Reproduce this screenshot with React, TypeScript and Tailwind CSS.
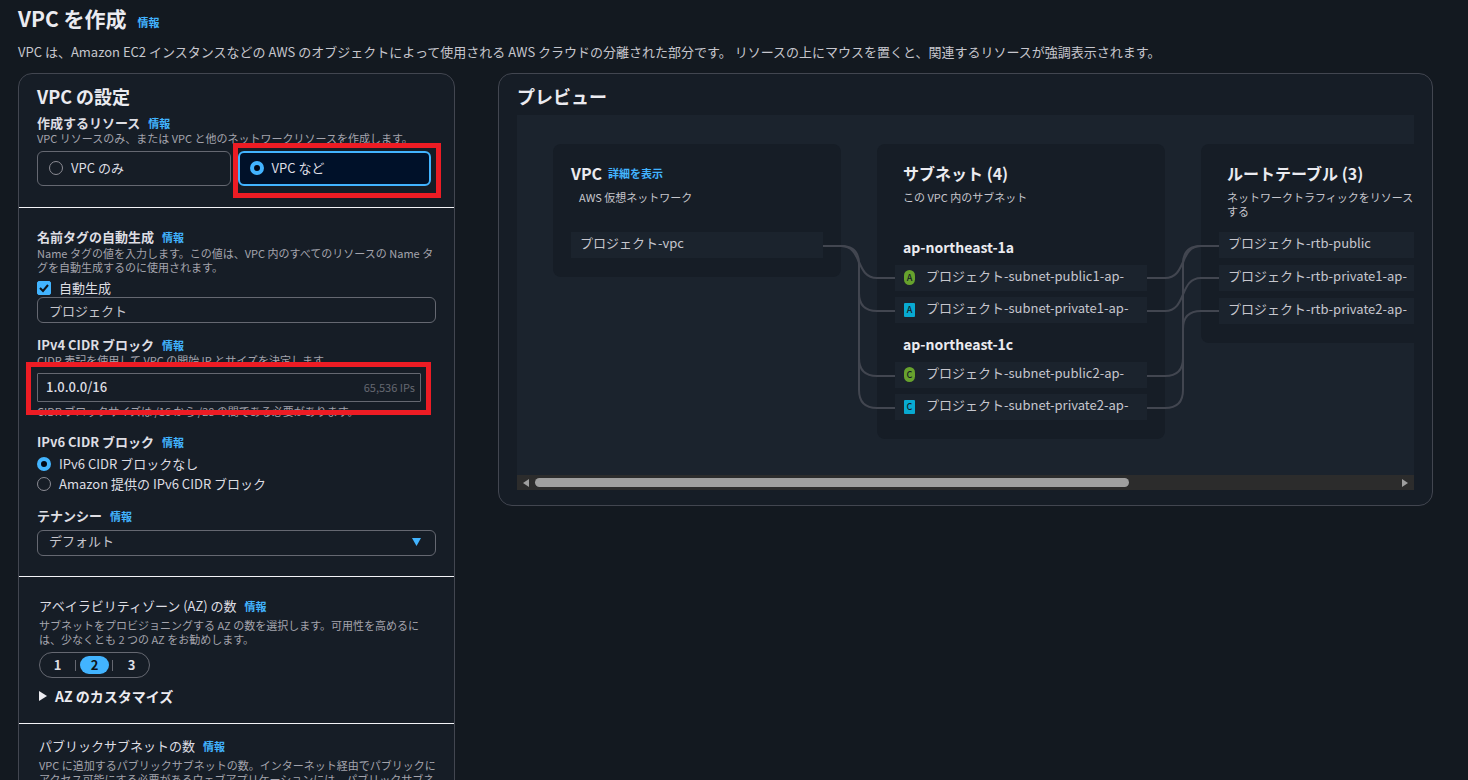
import { useState } from 'react';
import type { ReactNode } from 'react';

const subnetZones = [
  {
    zone: 'ap-northeast-1a',
    letter: 'A',
    subnets: [
      { name: 'プロジェクト-subnet-public1-ap-', isPublic: true },
      { name: 'プロジェクト-subnet-private1-ap-', isPublic: false },
    ],
  },
  {
    zone: 'ap-northeast-1c',
    letter: 'C',
    subnets: [
      { name: 'プロジェクト-subnet-public2-ap-', isPublic: true },
      { name: 'プロジェクト-subnet-private2-ap-', isPublic: false },
    ],
  },
];

const routeTables = [
  'プロジェクト-rtb-public',
  'プロジェクト-rtb-private1-ap-',
  'プロジェクト-rtb-private2-ap-',
];

// connectors between the resource rows
const connectors = [
  'M306 131H324C346 131 338 163 360 163H378',
  'M306 131H324Q342 131 342 149V178Q342 196 360 196H378',
  'M342 149V243Q342 261 360 261H378',
  'M342 149V275Q342 293 360 293H378',
  'M630 163H648C670 163 662 131 684 131H702',
  'M630 196H648C670 196 662 163 684 163H702',
  'M630 261H648Q666 261 666 243V149Q666 131 684 131H702',
  'M630 293H648Q666 293 666 275V214Q666 196 684 196H702',
];

function InfoLink({ children = '情報' }: { children?: ReactNode }) {
  return (
    <a href="#" className="text-[11px] font-bold text-[#42b4ff]">
      {children}
    </a>
  );
}

function Hint({ children }: { children: ReactNode }) {
  return <p className="text-[11px] leading-[14px] text-[#a4a4ad]">{children}</p>;
}

function FieldTitle({ children, light }: { children: ReactNode; light?: boolean }) {
  return (
    <div className="flex items-center gap-2 leading-4">
      <span className={light ? 'text-[#dedee3]' : 'font-bold text-[#dedee3]'}>{children}</span>
      <InfoLink />
    </div>
  );
}

function Radio({
  name,
  checked,
  onChange,
}: {
  name: string;
  checked: boolean;
  onChange: () => void;
}) {
  return (
    <input
      type="radio"
      name={name}
      checked={checked}
      onChange={onChange}
      className="size-[14px] shrink-0 appearance-none rounded-full border border-[#8c8c94] checked:border-4 checked:border-[#42b4ff] checked:bg-[#000716]"
    />
  );
}

function ResourceCard({
  title,
  description,
  link,
  inset,
  children,
}: {
  title: string;
  description: string;
  link?: string;
  inset?: boolean;
  children: ReactNode;
}) {
  return (
    <section className="w-[288px] shrink-0 rounded-lg bg-[#161d26] px-[18px] pb-[19px]">
      <div className={inset ? 'h-[88px] pt-[19px] pl-2' : 'h-[88px] pt-[19px]'}>
        <h3 className="flex items-center gap-[6px] text-base leading-5 font-bold text-[#ebebf0]">
          {title}
          {link && <InfoLink>{link}</InfoLink>}
        </h3>
        <p
          className={
            inset
              ? 'mt-[7px] text-[11px] leading-[14px] whitespace-pre text-[#c6c6cd]'
              : 'mt-[7px] pl-2 text-[11px] leading-[14px] text-[#c6c6cd]'
          }
        >
          {description}
        </p>
      </div>
      {children}
    </section>
  );
}

function ResourceRow({ children }: { children: ReactNode }) {
  return (
    <li className="flex h-[26px] items-center gap-[11px] bg-[#1b232d] px-[9px] pb-1 whitespace-nowrap text-[#c6c6cd]">
      {children}
    </li>
  );
}

function ZoneBadge({ letter, isPublic }: { letter: string; isPublic: boolean }) {
  return (
    <span
      className={
        isPublic
          ? 'mt-[3px] flex h-[15px] w-[11px] items-center justify-center rounded-full bg-[#67a22d] text-[9px] font-medium text-[#161d26]'
          : 'mt-[3px] flex h-[14px] w-[11px] items-center justify-center rounded-[1px] bg-[#08aad2] text-[9px] font-medium text-[#161d26]'
      }
    >
      {letter}
    </span>
  );
}

function PreviewPanel() {
  return (
    <section className="min-w-0 rounded-[14px] border border-[#424650] bg-[#161d26] px-[18px] pt-[10px] pb-[15px]">
      <h2 className="text-lg leading-6 font-bold text-[#ebebf0]">プレビュー</h2>
      <div className="mt-[7px] overflow-hidden bg-[#1b232d]">
        <div className="relative flex h-[360px] items-start gap-9 pt-[29px] pl-9">
          <ResourceCard title="VPC" link="詳細を表示" description="AWS 仮想ネットワーク">
            <ul>
              <ResourceRow>プロジェクト-vpc</ResourceRow>
            </ul>
          </ResourceCard>

          <ResourceCard inset title="サブネット (4)" description="この VPC 内のサブネット">
            <div className="flex flex-col gap-[6px]">
              {subnetZones.map(({ zone, letter, subnets }) => (
                <div key={zone}>
                  <h4 className="h-[33px] pl-2 text-sm leading-[30px] font-bold text-[#ebebf0]">
                    {zone}
                  </h4>
                  <ul className="flex flex-col gap-[6px]">
                    {subnets.map((subnet) => (
                      <ResourceRow key={subnet.name}>
                        <ZoneBadge letter={letter} isPublic={subnet.isPublic} />
                        {subnet.name}
                      </ResourceRow>
                    ))}
                  </ul>
                </div>
              ))}
            </div>
          </ResourceCard>

          <ResourceCard
            inset
            title="ルートテーブル (3)"
            description={'ネットワークトラフィックをリソースにルーティング\nする'}
          >
            <ul className="flex flex-col gap-[7px]">
              {routeTables.map((name) => (
                <ResourceRow key={name}>{name}</ResourceRow>
              ))}
            </ul>
          </ResourceCard>

          <svg
            className="pointer-events-none absolute top-0 left-0"
            width="972"
            height="360"
            fill="none"
            stroke="#424650"
            strokeWidth="2"
          >
            {connectors.map((d) => (
              <path key={d} d={d} />
            ))}
          </svg>
        </div>

        <div className="flex h-[15px] items-center bg-[#2c2c2c] px-[6px]">
          <svg width="6" height="8" viewBox="0 0 6 8" fill="#9f9f9f">
            <path d="M6 0v8L0 4z" />
          </svg>
          <div className="mx-[6px] flex-1">
            <div className="h-[9px] w-[69%] rounded-full bg-[#9f9f9f]" />
          </div>
          <svg width="6" height="8" viewBox="0 0 6 8" fill="#9f9f9f">
            <path d="M0 0v8l6-4z" />
          </svg>
        </div>
      </div>
    </section>
  );
}

function SettingsPanel() {
  const [resource, setResource] = useState('more');
  const [autoName, setAutoName] = useState(true);
  const [nameTag, setNameTag] = useState('プロジェクト');
  const [cidr, setCidr] = useState('1.0.0.0/16');
  const [ipv6, setIpv6] = useState('none');
  const [azCount, setAzCount] = useState(2);

  return (
    <section className="divide-y divide-[#f3f3f7] rounded-t-[14px] border border-[#424650] bg-[#161d26]">
      <div className="px-[18px] pt-[10px] pb-[21px]">
        <h2 className="text-lg leading-6 font-bold text-[#ebebf0]">VPC の設定</h2>
        <div className="mt-[7px]">
          <FieldTitle>作成するリソース</FieldTitle>
          <Hint>VPC リソースのみ、または VPC と他のネットワークリソースを作成します。</Hint>
        </div>
        <div className="mt-[6px] grid grid-cols-2 gap-[7px] pr-[5px]">
          <label className="flex h-[35px] items-center gap-2 rounded-md border border-[#656871] px-[11px] pb-px text-[#dedee3]">
            <Radio name="resource" checked={resource === 'only'} onChange={() => setResource('only')} />
            VPC のみ
          </label>
          <div className="relative">
            <label className="flex h-[35px] items-center gap-2 rounded-md border-2 border-[#42b4ff] bg-[#001129] px-[10px] pb-px text-[#dedee3]">
              <Radio name="resource" checked={resource === 'more'} onChange={() => setResource('more')} />
              VPC など
            </label>
            <span className="pointer-events-none absolute -top-2 -right-[10px] -bottom-3 -left-[5px] border-5 border-[#ed1c24]" />
          </div>
        </div>
      </div>

      <div className="px-[18px] pt-[21px] pb-5">
        <FieldTitle>名前タグの自動生成</FieldTitle>
        <div className="mt-px">
          <Hint>
            Name タグの値を入力します。この値は、VPC 内のすべてのリソースの Name タグを自動生成するのに使用されます。
          </Hint>
        </div>
        <label className="mt-[6px] flex items-center gap-2 leading-4 text-[#dedee3]">
          <span className="relative flex size-[14px]">
            <input
              type="checkbox"
              checked={autoName}
              onChange={(e) => setAutoName(e.target.checked)}
              className="size-[14px] appearance-none rounded-[2px] border border-[#8c8c94] checked:border-[#42b4ff] checked:bg-[#42b4ff]"
            />
            {autoName && (
              <svg
                className="pointer-events-none absolute inset-0"
                viewBox="0 0 14 14"
                fill="none"
                stroke="#0f141a"
                strokeWidth="2"
              >
                <path d="M3 7l3 3 5-6" />
              </svg>
            )}
          </span>
          自動生成
        </label>
        <input
          type="text"
          aria-label="名前タグ"
          value={nameTag}
          onChange={(e) => setNameTag(e.target.value)}
          className="mt-px block h-[26px] w-full rounded-md border border-[#656871] bg-transparent px-[11px] text-[#c6c6cd] outline-none"
        />

        <div className="mt-[14px]">
          <FieldTitle>IPv4 CIDR ブロック</FieldTitle>
          <Hint>CIDR 表記を使用して VPC の開始 IP とサイズを決定します。</Hint>
        </div>
        <div className="relative mt-[6px] mr-[15px]">
          <div className="flex h-[29px] items-center rounded-[1px] border border-[#656871] pr-[5px] pl-2">
            <input
              type="text"
              aria-label="IPv4 CIDR ブロック"
              value={cidr}
              onChange={(e) => setCidr(e.target.value)}
              className="min-w-0 flex-1 bg-transparent pb-px font-medium text-[#dedee3] outline-none"
            />
            <span className="text-[11px] text-[#656871]">65,536 IPs</span>
          </div>
          <span className="pointer-events-none absolute -top-[11px] -right-[10px] -bottom-[13px] -left-[11px] border-5 border-[#ed1c24]" />
        </div>
        <div className="mt-[2px]">
          <Hint>CIDR ブロックサイズは /16 から /28 の間である必要があります。</Hint>
        </div>

        <div className="mt-4">
          <FieldTitle>IPv6 CIDR ブロック</FieldTitle>
        </div>
        <div className="mt-1 text-[#dedee3]">
          <label className="flex h-5 items-center gap-2">
            <Radio name="ipv6" checked={ipv6 === 'none'} onChange={() => setIpv6('none')} />
            IPv6 CIDR ブロックなし
          </label>
          <label className="flex h-5 items-center gap-2">
            <Radio name="ipv6" checked={ipv6 === 'amazon'} onChange={() => setIpv6('amazon')} />
            Amazon 提供の IPv6 CIDR ブロック
          </label>
        </div>

        <div className="mt-[14px]">
          <FieldTitle>テナンシー</FieldTitle>
        </div>
        <div className="relative mt-[6px]">
          <select
            aria-label="テナンシー"
            className="block h-[26px] w-full appearance-none rounded-md border border-[#656871] bg-[#161d26] px-[11px] pb-1 text-[#c6c6cd] outline-none"
          >
            <option>デフォルト</option>
            <option>専有</option>
          </select>
          <svg
            className="pointer-events-none absolute top-2 right-[15px]"
            width="9"
            height="8"
            viewBox="0 0 9 8"
            fill="#42b4ff"
          >
            <path d="M0 0h9L4.5 8z" />
          </svg>
        </div>
      </div>

      <div className="px-5 pt-[21px] pb-[17px]">
        <FieldTitle light>アベイラビリティゾーン (AZ) の数</FieldTitle>
        <div className="mt-1">
          <Hint>
            サブネットをプロビジョニングする AZ の数を選択します。可用性を高めるには、少なくとも 2 つの AZ をお勧めします。
          </Hint>
        </div>
        <div className="mt-[6px] flex h-[26px] w-[111px] items-center justify-between rounded-full border border-[#656871] px-[3px]">
          {[1, 2, 3].map((n) => (
            <div key={n} className="flex items-center gap-1">
              {n > 1 && <span className="h-[11px] w-px bg-[#656871]" />}
              <button
                type="button"
                onClick={() => setAzCount(n)}
                className={
                  azCount === n
                    ? 'h-[18px] w-[29px] rounded-full bg-[#42b4ff] leading-[18px] font-bold text-[#0f141a]'
                    : 'h-[18px] w-[29px] rounded-full leading-[18px] font-bold text-[#dedee3]'
                }
              >
                {n}
              </button>
            </div>
          ))}
        </div>
        <button
          type="button"
          className="mt-2 flex items-center gap-2 text-sm leading-5 font-bold text-[#ebebf0]"
        >
          <svg width="8" height="10" viewBox="0 0 8 10" fill="currentColor">
            <path d="M0 0v10l8-5z" />
          </svg>
          AZ のカスタマイズ
        </button>
      </div>

      <div className="pt-[14px] pr-3 pb-5 pl-5">
        <FieldTitle light>パブリックサブネットの数</FieldTitle>
        <div className="mt-1">
          <Hint>
            VPC に追加するパブリックサブネットの数。インターネット経由でパブリックにアクセス可能にする必要があるウェブアプリケーションには、パブリックサブネットを使用します。
          </Hint>
        </div>
      </div>
    </section>
  );
}

export default function App() {
  return (
    <main
      lang="ja"
      className="h-screen overflow-hidden bg-[#131920] pr-[35px] pl-[18px] font-['Noto_Sans_CJK_JP',sans-serif] text-[13px]"
    >
      <header className="pt-[3px]">
        <div className="flex items-baseline gap-[11px]">
          <h1 className="text-[21px] leading-[30px] font-bold text-[#ebebf0]">VPC を作成</h1>
          <InfoLink />
        </div>
        <p className="mt-[9px] leading-5 text-[#c6c6cd]">
          VPC は、Amazon EC2 インスタンスなどの AWS のオブジェクトによって使用される AWS クラウドの分離された部分です。 リソースの上にマウスを置くと、関連するリソースが強調表示されます。
        </p>
      </header>
      <div className="mt-[11px] grid grid-cols-[437px_minmax(0,1fr)] items-start gap-[43px]">
        <SettingsPanel />
        <PreviewPanel />
      </div>
    </main>
  );
}
